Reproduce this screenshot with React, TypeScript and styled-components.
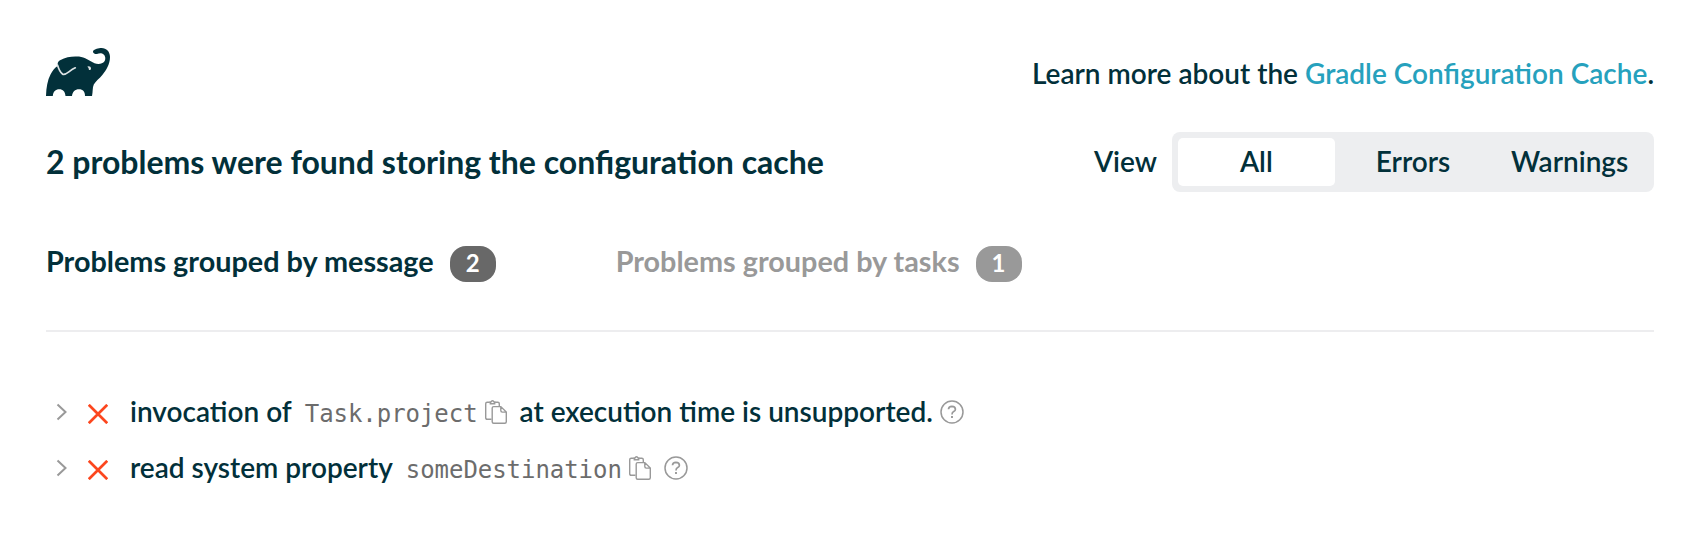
import React from 'react';
import styled, { createGlobalStyle } from 'styled-components';

const GlobalStyle = createGlobalStyle`
  * { box-sizing: border-box; }
  body {
    margin: 0;
    background: #fff;
    color: #02303a;
    font-family: Lato, sans-serif;
    font-size: 28px;
    line-height: 36px;
  }
`;

const Page = styled.div`
  padding: 48px 44px 0 46px;
  height: 550px;
`;

const Header = styled.header`
  display: flex;
  justify-content: space-between;
  height: 84px;
`;

const LearnMore = styled.div`
  padding-top: 7px;
  font-weight: 600;
`;

const Link = styled.a`
  color: #26a1bd;
  text-decoration: none;
  cursor: pointer;
`;

const Summary = styled.div`
  display: flex;
  justify-content: space-between;
  align-items: center;
  height: 60px;
`;

const Title = styled.h1`
  margin: 0;
  font-size: 32px;
  font-weight: 700;
  line-height: 40px;
`;

const ViewFilter = styled.div`
  display: flex;
  align-items: center;
  gap: 15px;
  font-weight: 600;
`;

const ViewLabel = styled.span`
  padding-bottom: 2px;
`;

const Segments = styled.div`
  display: grid;
  grid-template-columns: repeat(3, 1fr);
  width: 482px;
  height: 60px;
  padding: 6px;
  border-radius: 8px;
  background: #edeef0;
`;

const Segment = styled.button<{ $selected?: boolean }>`
  border: 0;
  padding: 0 0 2px;
  border-radius: 5px;
  background: ${(p) => (p.$selected ? '#fff' : 'transparent')};
  color: inherit;
  font: inherit;
`;

const Tabs = styled.nav`
  display: flex;
  gap: 120px;
  height: 140px;
  padding-top: 51px;
  border-bottom: 2px solid #ededef;
`;

const Tab = styled.div<{ $active?: boolean }>`
  display: flex;
  align-items: flex-start;
  gap: 16px;
  font-size: 28.8px;
  font-weight: 700;
  color: ${(p) => (p.$active ? '#02303a' : '#999')};
`;

const Badge = styled.span<{ $active?: boolean }>`
  width: 46px;
  height: 36px;
  margin-top: 3px;
  border-radius: 16px;
  background: ${(p) => (p.$active ? '#686868' : '#999')};
  color: #fff;
  font-size: 24px;
  line-height: 34px;
  text-align: center;
`;

const Problems = styled.ul`
  margin: 0;
  padding: 61px 0 0 10px;
  list-style: none;
`;

const Problem = styled.li`
  display: flex;
  align-items: baseline;
  height: 56px;
  font-weight: 600;
  white-space: pre;
`;

const Message = styled.span<{ $indent?: number }>`
  margin-left: ${(p) => p.$indent ?? 0}px;
`;

const Code = styled.code`
  margin-left: 13px;
  color: #6c6c6c;
  font-family: 'DejaVu Sans Mono', monospace;
  font-size: 24px;
  font-weight: 400;
  letter-spacing: -0.05px;
`;

const Icon = styled.svg<{ $left?: number; $drop: number }>`
  flex: none;
  display: block;
  margin-left: ${(p) => p.$left ?? 0}px;
  transform: translateY(${(p) => p.$drop}px);
`;

const Logo = () => (
  <svg width="64" height="48" viewBox="0 0 64 48">
    <path
      fill="#02303a"
      d="M0 48C.3 39.5 1.500 32 4.500 26.500C6.500 22.500 9 19.500 12 17.800C11 15.500 12 13.200 14.500 12C20 8.800 27 8 33 8.600C39 9.300 43.500 13 48.500 15.300C52 16.800 56.500 16.200 58.500 13.300C60.300 10.300 59 6.500 56 5.500C54 4.800 52.500 5.700 51 6C49 6.300 46.700 5 47 3.200C48.500 .8 52.500 0 55.500 0C60.500 0 64 3.800 64 9C64 16.500 60 22.500 56.500 26.800C53.500 30.500 49.500 33.500 47.800 36.500C46.300 39.500 47 44 46 48H39C39 44 37 41.300 33 41.300C29 41.300 26.500 44 26 48H19.500C19 43.500 17 41.300 13.300 41.300C9.500 41.300 7.300 43.500 6.800 48Z"
    />
    <path
      d="M11.500 17C12.500 20.500 14 24 16.500 26C19.500 28.200 23 22.500 29.300 19.800"
      fill="none"
      stroke="#dce2e4"
      strokeWidth="1.700"
      strokeLinecap="round"
    />
    <path d="M41.200 18.800C42.500 17.500 45 18.300 45 20.500C45 21.800 43.800 22.300 42.900 22C43 20.500 42.300 19.300 41.200 18.800Z" fill="#dce2e4" />
  </svg>
);

const Chevron = () => (
  <Icon width="12" height="18" viewBox="0 0 12 18" fill="none" stroke="#999" strokeWidth="2" $drop={-1}>
    <path d="M1.500 1.500L9.500 9L1.500 16.500" />
  </Icon>
);

const Cross = () => (
  <Icon width="20" height="20" viewBox="0 0 20 20" fill="none" stroke="#fc461e" strokeWidth="2.700" $left={20} $drop={2}>
    <path d="M.8 .8L19.200 19.200M19.200 .8L.8 19.200" />
  </Icon>
);

const Copy = () => (
  <Icon width="22" height="24" viewBox="0 0 22 24" fill="none" stroke="#999" strokeWidth="1.400" $left={7} $drop={2}>
    <path d="M6.500 19.300H2.200Q.7 19.300 .7 17.800V3.700Q.7 2.200 2.200 2.200H4.900M10.100 2.200H12.800Q14.300 2.200 14.300 3.700V6.100" />
    <path d="M5.300 3.700V1.900H6.200Q6.400 .7 7.500 .7T8.800 1.900H9.700V3.700Z" />
    <path d="M15.800 6.600H8.700Q7.200 6.600 7.200 8.100V21.800Q7.200 23.300 8.700 23.300H19.800Q21.300 23.300 21.300 21.800V12.100ZM15.800 6.600V10.600Q15.800 12.100 17.300 12.100H21.300" />
  </Icon>
);

const Help = ({ left }: { left: number }) => (
  <Icon width="24" height="24" viewBox="0 0 24 24" fill="none" stroke="#999" strokeWidth="1.500" $left={left} $drop={2}>
    <circle cx="12" cy="12" r="11" />
    <path d="M8.500 9.300Q8.600 6.400 11.900 6.300Q15.400 6.400 15.400 9.200Q15.400 10.700 13.700 11.600Q12 12.500 12 14.500" strokeWidth="1.700" />
    <path d="M12 16.100V18" strokeWidth="1.900" />
  </Icon>
);

export default function App() {
  return (
    <>
      <GlobalStyle />
      <Page>
        <Header>
          <Logo />
          <LearnMore>
            Learn more about the <Link>Gradle Configuration Cache</Link>.
          </LearnMore>
        </Header>
        <Summary>
          <Title>2 problems were found storing the configuration cache</Title>
          <ViewFilter>
            <ViewLabel>View</ViewLabel>
            <Segments>
              <Segment $selected>All</Segment>
              <Segment>Errors</Segment>
              <Segment>Warnings</Segment>
            </Segments>
          </ViewFilter>
        </Summary>
        <Tabs>
          <Tab $active>
            Problems grouped by message<Badge $active>2</Badge>
          </Tab>
          <Tab>
            Problems grouped by tasks<Badge>1</Badge>
          </Tab>
        </Tabs>
        <Problems>
          <Problem>
            <Chevron />
            <Cross />
            <Message $indent={22}>invocation of</Message>
            <Code>Task.project</Code>
            <Copy />
            <Message $indent={13}>at execution time is unsupported.</Message>
            <Help left={7} />
          </Problem>
          <Problem>
            <Chevron />
            <Cross />
            <Message $indent={22}>read system property</Message>
            <Code>someDestination</Code>
            <Copy />
            <Help left={13} />
          </Problem>
        </Problems>
      </Page>
    </>
  );
}
